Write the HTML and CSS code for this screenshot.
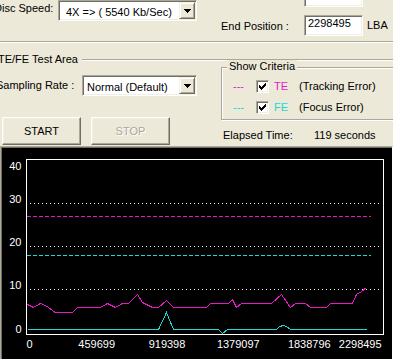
FILE: index.html
```html
<!DOCTYPE html>
<html>
<head>
<meta charset="utf-8">
<title>TE/FE Test</title>
<link rel="stylesheet" href="styles.css">
</head>
<body>
<div class="dialog">
  <div class="top">
    <div class="speed-row">
      <span class="lbl-speed">Disc Speed:</span>
      <div class="combo combo-speed">
        <span class="combo-text">4X =&gt; ( 5540 Kb/Sec)</span>
        <span class="drop"><svg width="7" height="4" viewBox="0 0 7 4"><path d="M0 0h7v1H0zM1 1h5v1H1zM2 2h3v1H2zM3 3h1v1H3z" fill="#000"/></svg></span>
      </div>
    </div>
    <div class="pos-col">
      <div class="pos-row"><span class="pos-lbl"></span><span class="edit"></span><span class="unit">LBA</span></div>
      <div class="pos-row"><span class="pos-lbl">End Position :</span><span class="edit">2298495</span><span class="unit">LBA</span></div>
    </div>
  </div>
  <div class="sep"></div>
  <div class="ta-head"><span class="ta-title">TE/FE Test Area</span><span class="groove"></span></div>
  <div class="ta-body">
    <div class="ta-left">
      <div class="rate-row">
        <span class="lbl-rate">Sampling Rate :</span>
        <div class="combo combo-rate">
          <span class="combo-text">Normal (Default)</span>
          <span class="drop"><svg width="7" height="4" viewBox="0 0 7 4"><path d="M0 0h7v1H0zM1 1h5v1H1zM2 2h3v1H2zM3 3h1v1H3z" fill="#000"/></svg></span>
        </div>
      </div>
      <div class="btn-row">
        <button class="btn">START</button>
        <button class="btn btn-off" disabled>STOP</button>
      </div>
    </div>
    <div class="ta-right">
      <div class="crit">
        <span class="crit-title">Show Criteria</span>
        <div class="crit-row">
          <span class="dash te">---</span>
          <span class="cb"><svg width="7" height="7" viewBox="0 0 7 7"><path d="M6 0h1v1H6zM5 1h2v1H5zM0 2h1v1H0zM4 2h3v1H4zM0 3h2v1H0zM3 3h3v1H3zM0 4h5v1H0zM1 5h3v1H1zM2 6h1v1H2z" fill="#000"/></svg></span>
          <span class="code te">TE</span>
          <span class="desc">(Tracking Error)</span>
        </div>
        <div class="crit-row">
          <span class="dash fe">---</span>
          <span class="cb"><svg width="7" height="7" viewBox="0 0 7 7"><path d="M6 0h1v1H6zM5 1h2v1H5zM0 2h1v1H0zM4 2h3v1H4zM0 3h2v1H0zM3 3h3v1H3zM0 4h5v1H0zM1 5h3v1H1zM2 6h1v1H2z" fill="#000"/></svg></span>
          <span class="code fe">FE</span>
          <span class="desc">(Focus Error)</span>
        </div>
      </div>
      <div class="elapsed"><span class="el-lbl">Elapsed Time:</span><span class="el-val">119 seconds</span></div>
    </div>
  </div>
  <div class="chart">
    <svg class="plot" width="391" height="212" viewBox="1 147 391 212">
      <rect x="26.5" y="159.5" width="357" height="175" fill="none" stroke="#fff" stroke-width="1" shape-rendering="crispEdges"/>
      <g stroke="#fff" stroke-width="1" stroke-dasharray="1 3" shape-rendering="crispEdges">
        <line x1="30" y1="203.5" x2="380" y2="203.5"/>
        <line x1="30" y1="246.5" x2="380" y2="246.5"/>
        <line x1="30" y1="289.5" x2="380" y2="289.5"/>
      </g>
      <line class="ref-te" x1="27" y1="216.5" x2="371" y2="216.5"/>
      <line class="ref-fe" x1="27" y1="255.5" x2="371" y2="255.5"/>
      <polyline class="trace-te" points="27.5,304.5 33.5,307.5 40.5,303.5 47.5,306.5 53.5,311.5 55.5,312.5 72.5,312.5 77.5,307.5 100.5,307.5 107.5,303.5 115.5,307.5 122.5,303.5 128.5,303.5 137.5,294.5 142.5,302.5 152.5,307.5 158.5,307.5 166.5,300.5 173.5,307.5 206.5,307.5 210.5,303.5 228.5,303.5 232.5,299.5 236.5,307.5 241.5,303.5 271.5,303.5 281.5,294.5 290.5,307.5 295.5,303.5 305.5,303.5 310.5,307.5 326.5,307.5 330.5,303.5 352.5,303.5 356.5,294.5 361.5,291.5 366.5,287.5"/>
      <polyline class="trace-fe" points="27.5,329.5 158.5,329.5 166.5,312.5 173.5,329.5 218.5,329.5 222.5,333.5 227.5,329.5 276.5,329.5 279.5,326.5 283.5,325.5 286.5,326.5 290.5,329.5 366.5,329.5"/>
      <g class="ax" text-anchor="end">
        <text x="21.5" y="170">40</text>
        <text x="21.5" y="203">30</text>
        <text x="21.5" y="246">20</text>
        <text x="21.5" y="289">10</text>
        <text x="21.5" y="333">0</text>
      </g>
      <g class="ax" text-anchor="middle">
        <text x="29.5" y="348">0</text>
        <text x="96.7" y="348">459699</text>
        <text x="167" y="348">919398</text>
        <text x="238.3" y="348">1379097</text>
        <text x="309.3" y="348">1838796</text>
        <text x="360.2" y="348">2298495</text>
      </g>
    </svg>
  </div>
</div>
</body>
</html>
```
FILE: styles.css
```css
html, body {
  margin: 0;
  width: 393px;
  height: 359px;
  overflow: hidden;
  background: #ece9d8;
}
body {
  font-family: "Liberation Sans", Arial, sans-serif;
  font-size: 11px;
  line-height: 13px;
  color: #000;
}
.dialog { width: 393px; }

/* top rows */
.top {
  display: grid;
  grid-template-columns: 221px 1fr;
  height: 41px;
}
.speed-row { display: flex; margin-left: -6px; }
.lbl-speed { flex: 0 0 64px; padding-top: 2px; white-space: nowrap; }

.combo {
  box-sizing: border-box;
  height: 21px;
  display: flex;
  padding: 1px;
  background: #fff;
  border: 1px solid;
  border-color: #aca899 #fff #fff #aca899;
  box-shadow: inset 1px 1px #716f64, inset -1px -1px #f1efe2;
}
.combo-speed { width: 139px; }
.combo-rate { width: 115px; }
.combo-text { flex: 1; padding-top: 4px; white-space: nowrap; overflow: hidden; }
.combo-speed .combo-text { padding-left: 6px; }
.combo-rate .combo-text { padding-left: 3px; }
.drop {
  flex: 0 0 16px;
  height: 17px;
  box-sizing: border-box;
  display: flex;
  align-items: center;
  justify-content: center;
  background: #ece9d8;
  border: 1px solid;
  border-color: #f1efe2 #716f64 #716f64 #f1efe2;
  box-shadow: inset 1px 1px #fff, inset -1px -1px #aca899;
}
.drop svg { display: block; }

.pos-col { display: flex; flex-direction: column; gap: 8px; margin-top: -14px; }
.pos-row { display: flex; height: 21px; }
.pos-lbl { flex: 0 0 83px; padding-top: 5px; white-space: nowrap; }
.edit {
  box-sizing: border-box;
  width: 59px;
  height: 21px;
  padding: 1px 2px 0 3px;
  background: #fff;
  border: 1px solid;
  border-color: #aca899 #fff #fff #aca899;
  box-shadow: inset 1px 1px #716f64, inset -1px -1px #f1efe2;
}
.unit { margin-left: 4px; padding-top: 4px; }

.sep {
  height: 0;
  border-top: 1px solid #aca899;
  border-bottom: 1px solid #fff;
}

/* test area */
.ta-head { display: flex; margin-top: 10px; height: 14px; }
.ta-title { flex: 0 0 84px; margin-left: -2px; white-space: nowrap; }
.groove {
  flex: 1;
  margin-top: 6px;
  height: 0;
  border-top: 1px solid #aca899;
  border-bottom: 1px solid #fff;
}
.ta-body {
  display: grid;
  grid-template-columns: 221px 1fr;
  height: 79px;
}
.rate-row { display: flex; margin-top: 8px; margin-left: -4px; }
.lbl-rate { flex: 0 0 86px; padding-top: 4px; white-space: nowrap; }

.btn-row { display: flex; gap: 10px; margin-top: 21px; margin-left: 2px; }
.btn {
  box-sizing: border-box;
  width: 79px;
  height: 28px;
  margin: 0;
  padding: 0;
  font: inherit;
  line-height: 13px;
  color: #000;
  background: #ece9d8;
  border: 1px solid;
  border-color: #fff #716f64 #716f64 #fff;
  box-shadow: inset -1px -1px #aca899, inset 1px 1px #f1efe2;
}
.btn-off { color: #aca899; text-shadow: 1px 1px #fff; }

.crit {
  position: relative;
  box-sizing: border-box;
  width: 200px;
  height: 53px;
  padding: 12px 0 0 11px;
  border: 1px solid #aca899;
  box-shadow: inset 1px 1px #fff, 1px 1px #fff;
}
.crit-title {
  position: absolute;
  top: -8px;
  left: 5px;
  padding: 0 2px;
  background: #ece9d8;
  white-space: nowrap;
}
.crit-row { display: flex; height: 13px; white-space: nowrap; }
.crit-row + .crit-row { margin-top: 8px; }
.dash { flex: 0 0 23px; }
.cb {
  box-sizing: border-box;
  flex: 0 0 13px;
  height: 13px;
  margin-right: 5px;
  display: flex;
  align-items: center;
  justify-content: center;
  background: #fff;
  border: 1px solid;
  border-color: #aca899 #fff #fff #aca899;
  box-shadow: inset 1px 1px #716f64, inset -1px -1px #f1efe2;
}
.cb svg { display: block; }
.code { flex: 0 0 25px; }
.te { color: #e818c8; }
.fe { color: #18d8d8; }

.elapsed { display: flex; margin-top: 9px; padding-left: 2px; white-space: nowrap; }
.el-lbl { flex: 0 0 91px; }

/* chart */
.chart {
  box-sizing: border-box;
  height: 213px;
  background: #000;
  border-top: 1px solid #aca899;
  border-left: 1px solid #aca899;
  border-right: 1px solid #fff;
  box-shadow: inset 1px 1px #716f64;
}
.plot { display: block; }
.ax {
  fill: #fff;
  font-family: "Liberation Sans", Arial, sans-serif;
  font-size: 11px;
}
.ref-te, .ref-fe {
  stroke-width: 1;
  stroke-dasharray: 4 2;
  shape-rendering: crispEdges;
}
.ref-te { stroke: #e818c8; }
.ref-fe { stroke: #18d8d8; }
.trace-te, .trace-fe {
  fill: none;
  stroke-width: 1;
  shape-rendering: crispEdges;
}
.trace-te { stroke: #e818c8; }
.trace-fe { stroke: #18d8d8; }
```
